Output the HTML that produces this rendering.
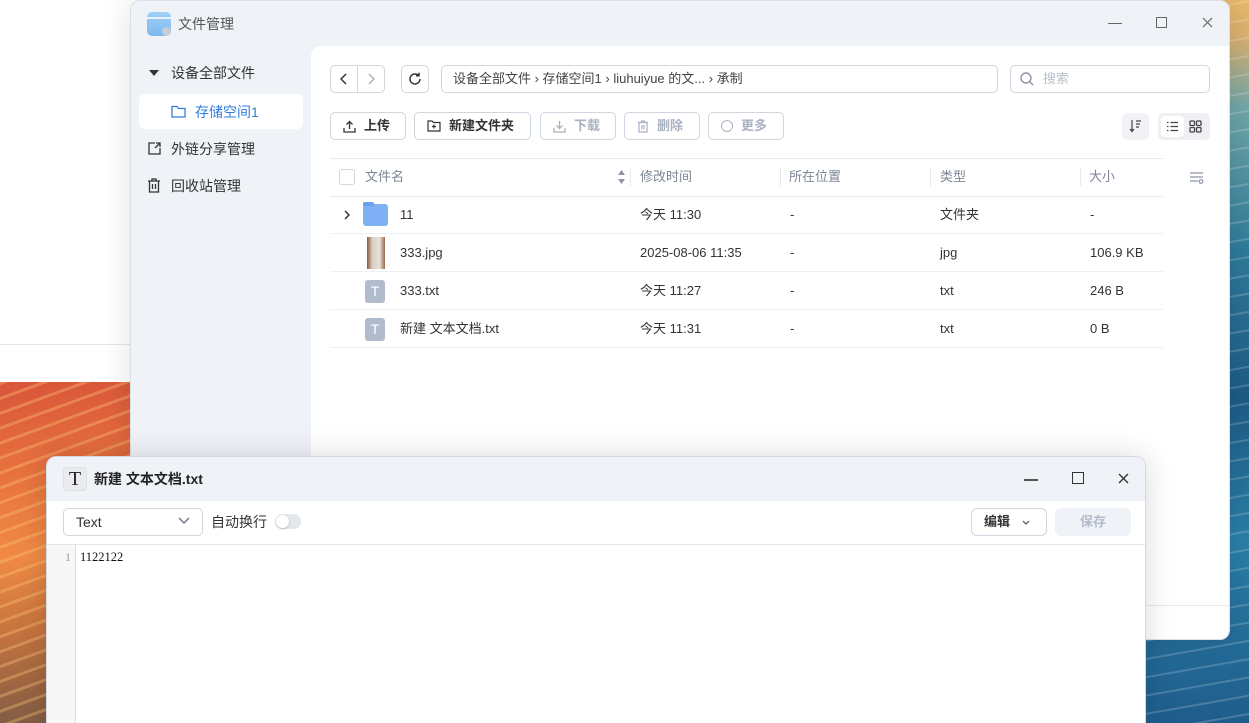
<!DOCTYPE html>
<html style="width:1249px;height:723px;overflow:hidden"><head><meta charset="utf-8">
<style>
*{box-sizing:border-box;margin:0;padding:0}
body{width:1249px;height:723px;overflow:hidden;position:relative;background:#fff;font-family:"Liberation Sans","Noto Sans CJK SC",sans-serif;font-size:14px;line-height:18px;color:#303133}
.wl{position:absolute;left:0;top:382px;width:140px;height:341px;background:
repeating-linear-gradient(160deg,rgba(255,200,120,.35) 0 3px,transparent 3px 14px),
linear-gradient(175deg,#d9553a 0%,#e9763f 30%,#f08a45 50%,#c8743e 70%,#7a5a45 100%)}
.wr{position:absolute;left:1146px;top:0;width:103px;height:723px;background:
repeating-linear-gradient(170deg,rgba(255,255,255,.18) 0 2px,transparent 2px 18px),
linear-gradient(180deg,#e8b86a 0%,#d9b070 5%,#6fa6a8 15%,#2e7a9a 35%,#1e5b86 55%,#2a80a8 75%,#1f5c8c 100%)}
.tlw{position:absolute;left:0;top:0;width:135px;height:345px;background:#fff;border-bottom:1px solid #e3e5ea}
.win{position:absolute;left:130px;top:0;width:1100px;height:640px;background:#eff2f7;border-radius:10px;border:1px solid #dcdfe5;box-shadow:0 0 30px rgba(0,0,0,.12);overflow:hidden}
.ttl{position:absolute;left:47px;top:14px;font-size:14px;color:#555}
.appic{position:absolute;left:16px;top:11px;width:24px;height:24px;border-radius:5px;background:linear-gradient(#9fd0f7,#7db9ee)}
.si{position:absolute;left:40px;font-size:14px;color:#333}
.content{position:absolute;left:180px;top:45px;width:920px;height:600px;background:#fff;border-top-left-radius:10px}
.box{position:absolute;border:1px solid #cfd6e0;border-radius:5px;background:#fff}
.btn{position:absolute;top:112px;height:28px;border:1px solid #cfd6e0;border-radius:5px;font-size:13px;line-height:16px;font-weight:bold;color:#333;display:flex;align-items:center;padding-left:12px;gap:8px}
.btn.dis{color:#aab2bf}
.abs{position:absolute}
.hd{position:absolute;top:169px;font-size:13px;line-height:16px;color:#7d8696}
.row{position:absolute;left:330px;width:833px;height:38px;border-bottom:1px solid #edf0f4}
.cell{position:absolute;top:11px;font-size:13px;line-height:16px;color:#333;white-space:nowrap}
.txtic{position:absolute;left:35px;top:8px;width:20px;height:23px;background:#b0bccc;border-radius:3px;color:#fff;font-size:14px;text-align:center;line-height:23px}
.ed{position:absolute;left:46px;top:456px;width:1100px;height:267px;background:#fff;border:1px solid #d4d8df;border-bottom:none;border-radius:10px 10px 0 0;box-shadow:0 0 30px rgba(0,0,0,.15);overflow:hidden}
</style></head><body>
<div class="tlw"></div>
<div class="wl"></div>
<div class="wr"></div>

<div class="win">
  <div class="appic"><div style="position:absolute;left:0;top:5px;width:24px;height:2px;background:#e6f3fd"></div><div style="position:absolute;right:0;bottom:0;width:9px;height:9px;border-radius:50%;background:#c6cdd6"></div></div>
  <div class="ttl">文件管理</div>
  <div class="abs" style="left:977px;top:22px;width:14px;height:1px;background:#666"></div>
  <div class="abs" style="left:1025px;top:16px;width:11px;height:11px;border:1px solid #666"></div>
  <svg class="abs" style="left:1071px;top:16px" width="11" height="11" viewBox="0 0 11 11"><path d="M1 1l9 9M10 1l-9 9" stroke="#666" stroke-width="1.2"/></svg>

  <div class="abs" style="left:18px;top:69px;width:0;height:0;border-left:5px solid transparent;border-right:5px solid transparent;border-top:6px solid #333"></div>
  <div class="si" style="top:63px">设备全部文件</div>
  <div class="abs" style="left:8px;top:93px;width:164px;height:35px;background:#fff;border-radius:6px"></div>
  <svg class="abs" style="left:40px;top:104px" width="15" height="13" viewBox="0 0 15 13"><path d="M1 1.5h5l1.5 2H14v8.5H1z" fill="none" stroke="#2f7de1" stroke-width="1.3"/></svg>
  <div class="si" style="top:102px;left:64px;color:#2f7de1">存储空间1</div>
  <svg class="abs" style="left:16px;top:140px" width="15" height="15" viewBox="0 0 15 15"><path d="M8 2H2v11h11V7M9 2h4v4M13 2L8 7" fill="none" stroke="#333" stroke-width="1.3"/></svg>
  <div class="si" style="top:139px">外链分享管理</div>
  <svg class="abs" style="left:16px;top:177px" width="14" height="15" viewBox="0 0 14 15"><path d="M1 3h12M5 3V1h4v2M2.5 3v11h9V3M5.5 6v5M8.5 6v5" fill="none" stroke="#333" stroke-width="1.3"/></svg>
  <div class="si" style="top:176px">回收站管理</div>

  <div class="content"></div>
  <div class="abs" style="left:180px;top:604px;width:920px;border-top:1px solid #e6e8ec"></div>
</div>

<!-- toolbar row 1 -->
<div class="box" style="left:330px;top:65px;width:55px;height:28px"></div>
<div class="abs" style="left:357px;top:66px;width:1px;height:26px;background:#cfd6e0"></div>
<svg class="abs" style="left:340px;top:73px" width="7" height="12" viewBox="0 0 7 12"><path d="M6 1L1 6l5 5" fill="none" stroke="#333" stroke-width="1.5"/></svg>
<svg class="abs" style="left:368px;top:73px" width="7" height="12" viewBox="0 0 7 12"><path d="M1 1l5 5-5 5" fill="none" stroke="#aab2bf" stroke-width="1.5"/></svg>
<div class="box" style="left:401px;top:65px;width:28px;height:28px"></div>
<svg class="abs" style="left:407px;top:71px" width="16" height="16" viewBox="0 0 16 16"><path d="M13 8a5 5 0 1 1-1.5-3.6M12 1.8v3h-3" fill="none" stroke="#333" stroke-width="1.5"/></svg>
<div class="box" style="left:441px;top:65px;width:557px;height:28px"></div>
<div class="abs" style="left:453px;top:70px;font-size:13px;color:#444;white-space:nowrap">设备全部文件 › 存储空间1 › liuhuiyue 的文... › 承制</div>
<div class="box" style="left:1010px;top:65px;width:200px;height:28px"></div>
<svg class="abs" style="left:1019px;top:71px" width="16" height="16" viewBox="0 0 16 16"><circle cx="7" cy="7" r="5" fill="none" stroke="#8a94a6" stroke-width="1.4"/><path d="M10.5 10.5L14 14" stroke="#8a94a6" stroke-width="1.4"/></svg>
<div class="abs" style="left:1043px;top:70px;font-size:13px;color:#b8bec9">搜索</div>

<!-- toolbar row 2 -->
<div class="btn" style="left:330px;width:76px"><svg width="13" height="13" viewBox="0 0 13 13"><path d="M6.5 9V1.5M3.5 4.5l3-3 3 3M1 8v4h11V8" fill="none" stroke="#333" stroke-width="1.3"/></svg>上传</div>
<div class="btn" style="left:414px;width:117px"><svg width="14" height="12" viewBox="0 0 14 12"><path d="M1 1h4l1.5 1.5H13V11H1z M7 4.5v4M5 6.5h4" fill="none" stroke="#333" stroke-width="1.2"/></svg>新建文件夹</div>
<div class="btn dis" style="left:540px;width:76px"><svg width="13" height="13" viewBox="0 0 13 13"><path d="M6.5 1v7.5M3.5 5.5l3 3 3-3M1 8v4h11V8" fill="none" stroke="#aab2bf" stroke-width="1.3"/></svg>下载</div>
<div class="btn dis" style="left:624px;width:76px"><svg width="12" height="13" viewBox="0 0 12 13"><path d="M1 2.5h10M4.5 2.5V1h3v1.5M2 2.5V12h8V2.5M5 5v4.5M7 5v4.5" fill="none" stroke="#aab2bf" stroke-width="1.2"/></svg>删除</div>
<div class="btn dis" style="left:708px;width:76px"><span style="display:inline-block;width:12px;height:12px;border:1.2px solid #aab2bf;border-radius:50%"></span>更多</div>
<div class="abs" style="left:1122px;top:113px;width:27px;height:27px;background:#f0f2f5;border-radius:5px"></div>
<svg class="abs" style="left:1129px;top:119px" width="13" height="14" viewBox="0 0 13 14"><path d="M3 1v11M1 10l2 2.5L5 10M7 2h5M7 5h4M7 8h3" fill="none" stroke="#444" stroke-width="1.2"/></svg>
<div class="abs" style="left:1158px;top:113px;width:52px;height:27px;background:#eef0f3;border-radius:5px"></div>
<div class="abs" style="left:1161px;top:116px;width:23px;height:21px;background:#fff;border-radius:4px"></div>
<svg class="abs" style="left:1166px;top:121px" width="13" height="11" viewBox="0 0 13 11"><path d="M1 1.5h1.5M1 5.5h1.5M1 9.5h1.5M4.5 1.5H12M4.5 5.5H12M4.5 9.5H12" stroke="#444" stroke-width="1.3"/></svg>
<svg class="abs" style="left:1189px;top:120px" width="13" height="13" viewBox="0 0 13 13"><g fill="none" stroke="#444" stroke-width="1.3"><rect x="1" y="1" width="4.5" height="4.5" rx="1"/><rect x="7.5" y="1" width="4.5" height="4.5" rx="1"/><rect x="1" y="7.5" width="4.5" height="4.5" rx="1"/><rect x="7.5" y="7.5" width="4.5" height="4.5" rx="1"/></g></svg>

<!-- table -->
<div class="abs" style="left:330px;top:158px;width:833px;border-top:1px solid #e6e9ee"></div>
<div class="abs" style="left:330px;top:196px;width:833px;border-top:1px solid #e6e9ee"></div>
<div class="abs" style="left:339px;top:169px;width:16px;height:16px;border:1px solid #cfd6e0;border-radius:3px"></div>
<div class="hd" style="left:365px">文件名</div>
<svg class="abs" style="left:617px;top:169px" width="9" height="16" viewBox="0 0 9 16"><path d="M4.5 1L8 6H1zM4.5 15L8 10H1z" fill="#8a94a6"/></svg>
<div class="abs" style="left:630px;top:168px;width:1px;height:18px;background:#e6e9ee"></div>
<div class="hd" style="left:640px">修改时间</div>
<div class="abs" style="left:780px;top:168px;width:1px;height:18px;background:#e6e9ee"></div>
<div class="hd" style="left:789px">所在位置</div>
<div class="abs" style="left:930px;top:168px;width:1px;height:18px;background:#e6e9ee"></div>
<div class="hd" style="left:940px">类型</div>
<div class="abs" style="left:1080px;top:168px;width:1px;height:18px;background:#e6e9ee"></div>
<div class="hd" style="left:1089px">大小</div>
<svg class="abs" style="left:1189px;top:171px" width="15" height="14" viewBox="0 0 15 14"><path d="M1 2h13M1 6h13M1 10h8" stroke="#8a94a6" stroke-width="1.2"/><circle cx="12" cy="10.5" r="1.8" fill="none" stroke="#8a94a6" stroke-width="1.2"/></svg>

<div class="row" style="top:196px">
  <svg class="abs" style="left:14px;top:14px" width="6" height="10" viewBox="0 0 6 10"><path d="M1 1l4 4-4 4" fill="none" stroke="#333" stroke-width="1.5"/></svg>
  <div class="abs" style="left:33px;top:8px;width:25px;height:22px;background:#7fb0f5;border-radius:3px"></div>
  <div class="abs" style="left:33px;top:6px;width:11px;height:4px;background:#6aa1ef;border-radius:2px 2px 0 0"></div>
  <div class="cell" style="left:70px">11</div>
  <div class="cell" style="left:310px">今天 11:30</div><div class="cell" style="left:460px">-</div>
  <div class="cell" style="left:610px">文件夹</div><div class="cell" style="left:760px">-</div>
</div>
<div class="row" style="top:234px">
  <div class="abs" style="left:37px;top:3px;width:18px;height:32px;background:linear-gradient(90deg,#8a5a3c,#d8d0c6 30%,#e6e1d9 70%,#9a6a4c)"></div>
  <div class="cell" style="left:70px">333.jpg</div>
  <div class="cell" style="left:310px">2025-08-06 11:35</div><div class="cell" style="left:460px">-</div>
  <div class="cell" style="left:610px">jpg</div><div class="cell" style="left:760px">106.9 KB</div>
</div>
<div class="row" style="top:272px">
  <div class="txtic">T</div>
  <div class="cell" style="left:70px">333.txt</div>
  <div class="cell" style="left:310px">今天 11:27</div><div class="cell" style="left:460px">-</div>
  <div class="cell" style="left:610px">txt</div><div class="cell" style="left:760px">246 B</div>
</div>
<div class="row" style="top:310px">
  <div class="txtic">T</div>
  <div class="cell" style="left:70px">新建 文本文档.txt</div>
  <div class="cell" style="left:310px">今天 11:31</div><div class="cell" style="left:460px">-</div>
  <div class="cell" style="left:610px">txt</div><div class="cell" style="left:760px">0 B</div>
</div>

<!-- editor -->
<div class="ed">
  <div class="abs" style="left:0;top:0;width:1100px;height:44px;background:#eff2f7"></div>
  <div class="abs" style="left:16px;top:10px;width:24px;height:24px;background:#e9ebee;border:1px solid #dcdfe3;border-radius:4px;text-align:center;font-family:'Liberation Serif',serif;font-size:20px;line-height:22px;color:#222">T</div>
  <div class="abs" style="left:47px;top:13px;font-size:14px;font-weight:bold;color:#222">新建 文本文档.txt</div>
  <div class="abs" style="left:977px;top:22px;width:14px;height:1.5px;background:#555"></div>
  <div class="abs" style="left:1025px;top:15px;width:12px;height:12px;border:1.5px solid #333"></div>
  <svg class="abs" style="left:1071px;top:16px" width="11" height="11" viewBox="0 0 11 11"><path d="M1 1l9 9M10 1l-9 9" stroke="#333" stroke-width="1.4"/></svg>
  <div class="abs" style="left:16px;top:51px;width:140px;height:28px;border:1px solid #cfd6e0;border-radius:5px"></div>
  <div class="abs" style="left:29px;top:56px;font-size:14px;color:#333">Text</div>
  <svg class="abs" style="left:131px;top:60px" width="12" height="8" viewBox="0 0 12 8"><path d="M1 1l5 5 5-5" fill="none" stroke="#7d8696" stroke-width="1.6"/></svg>
  <div class="abs" style="left:164px;top:56px;font-size:14px;color:#333">自动换行</div>
  <div class="abs" style="left:228px;top:57px;width:26px;height:15px;background:#e4e7ec;border-radius:8px"></div>
  <div class="abs" style="left:229px;top:58px;width:13px;height:13px;background:#fff;border-radius:50%;box-shadow:0 1px 2px rgba(0,0,0,.2)"></div>
  <div class="abs" style="left:924px;top:51px;width:76px;height:28px;border:1px solid #cfd6e0;border-radius:6px"></div>
  <div class="abs" style="left:937px;top:56px;font-size:13px;font-weight:bold;color:#333">编辑</div>
  <svg class="abs" style="left:975px;top:63px" width="8" height="5" viewBox="0 0 8 5"><path d="M1 1l3 3 3-3" fill="none" stroke="#555" stroke-width="1.2"/></svg>
  <div class="abs" style="left:1008px;top:51px;width:76px;height:28px;background:#eff2f7;border-radius:6px;text-align:center;line-height:28px;font-size:13px;font-weight:bold;color:#b4bccb">保存</div>
  <div class="abs" style="left:0;top:87px;width:1100px;border-top:1px solid #e3e6eb"></div>
  <div class="abs" style="left:0;top:88px;width:29px;height:200px;background:#f7f7f7;border-right:1px solid #ddd"></div>
  <div class="abs" style="left:18px;top:91px;font-family:'Liberation Serif',serif;font-size:12px;color:#999">1</div>
  <div class="abs" style="left:33px;top:91px;font-family:'Liberation Serif',serif;font-size:12.5px;color:#111">1122122</div>
</div>
</body></html>
